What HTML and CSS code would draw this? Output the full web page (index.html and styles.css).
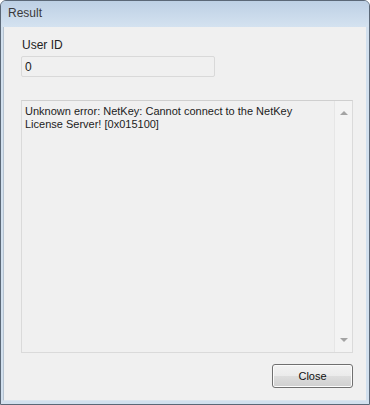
FILE: index.html
```html
<!DOCTYPE html>
<html lang="en">
<head>
  <meta charset="UTF-8">
  <title>Result</title>
  <link rel="stylesheet" href="styles.css">
</head>
<body>
  <div class="window">
    <header class="title-bar">Result</header>
    <div class="frame">
      <main class="dialog">
        <label class="field-label">User ID</label>
        <div class="field-box">0</div>

        <!-- read-only multiline output -->
        <div class="output">
          <div class="output-text">Unknown error: NetKey: Cannot connect to the NetKey License Server! [0x015100]</div>
          <div class="scrollbar">
            <span class="arrow up"></span>
            <span class="arrow down"></span>
          </div>
        </div>

        <div class="actions">
          <button type="button" class="btn">Close</button>
        </div>
      </main>
    </div>
  </div>
</body>
</html>
```

FILE: styles.css
```css
* {
  box-sizing: border-box;
  margin: 0;
  padding: 0;
}

body {
  width: 370px;
  height: 405px;
  font-family: "Liberation Sans", Arial, sans-serif;
  background: #ffffff;
}

/* Window chrome */
.window {
  height: 405px;
  display: flex;
  flex-direction: column;
  border: 1px solid #5b6877;
  border-radius: 6px 6px 0 0;
  background: #c6d7ea;
  overflow: hidden;
}

.title-bar {
  height: 26px;
  flex-shrink: 0;
  padding: 5px 0 0 7px;
  font-size: 12px;
  color: #3a3a3a;
  background: linear-gradient(to bottom, #bdd0e4, #d4e2f0);
}

.frame {
  flex: 1;
  display: flex;
  padding: 0 3px 3px 2px;
  background: #d2e0ee;
}

/* Dialog body */
.dialog {
  flex: 1;
  display: flex;
  flex-direction: column;
  padding: 11px 13px 0 17px;
  background: #f0f0f0;
  border-left: 1px solid #b6c3d0;
  border-bottom: 1px solid #dbe4ee;
  font-size: 11px;
  color: #1a1a1a;
}

.field-label {
  display: block;
  margin-left: 1px;
  font-size: 12px;
  line-height: 15px;
  color: #222;
}

.field-box {
  width: 194px;
  height: 21px;
  margin-top: 3px;
  padding: 3px 0 0 3px;
  border: 1px solid #d9d9d9;
  border-radius: 2px;
  font-size: 12px;
  background: #f0f0f0;
}

.output {
  height: 253px;
  margin-top: 23px;
  display: flex;
  border: 1px solid #dadada;
  border-top-color: #cfcfcf;
  background: #f0f0f0;
}

.output-text {
  flex: 1;
  padding: 4px 20px 0 3px;
  line-height: 13px;
  color: #1c1c1c;
}

.scrollbar {
  width: 18px;
  display: flex;
  flex-direction: column;
  justify-content: space-between;
  align-items: center;
  padding: 10px 0 10px;
  border-left: 1px solid #e6e6e6;
  background: #f3f3f3;
}

.arrow {
  width: 0;
  height: 0;
  border-left: 4px solid transparent;
  border-right: 4px solid transparent;
}

.arrow.up {
  border-bottom: 4px solid #a3a3a3;
}

.arrow.down {
  border-top: 4px solid #a3a3a3;
}

.actions {
  display: flex;
  justify-content: flex-end;
  margin-top: 11px;
}

.btn {
  width: 81px;
  height: 24px;
  border: 1px solid #707070;
  border-radius: 3px;
  font-family: "Liberation Sans", Arial, sans-serif;
  font-size: 11px;
  color: #111;
  background: linear-gradient(to bottom, #f3f3f3 0%, #ebebeb 48%, #dddddd 52%, #cfcfcf 100%);
  box-shadow: inset 0 0 0 1px #fcfcfc;
}
```
